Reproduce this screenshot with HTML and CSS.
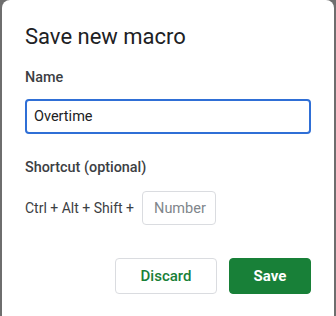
FILE: index.html
```html
<!DOCTYPE html>
<html>
<head>
<meta charset="utf-8">
<link rel="stylesheet" href="styles.css">
</head>
<body>
<div class="dialog">
  <h1 class="title">Save new macro</h1>
  <div class="label name-label">Name</div>
  <div class="input name-input">Overtime</div>
  <div class="label shortcut-label">Shortcut (optional)</div>
  <div class="shortcut-row">
    <span class="keys">Ctrl + Alt + Shift +</span>
    <div class="input number-input">Number</div>
  </div>
  <div class="actions">
    <button class="btn btn-discard">Discard</button>
    <button class="btn btn-save">Save</button>
  </div>
</div>
</body>
</html>
```
FILE: styles.css
```css
html, body {
  margin: 0;
  padding: 0;
  height: 100%;
}
body {
  background: #6e6e6e;
  font-family: Roboto, "Liberation Sans", sans-serif;
  overflow: hidden;
}
.dialog {
  box-sizing: border-box;
  margin: 0 2px;
  height: 316px;
  background: #ffffff;
  border-radius: 8px 8px 0 0;
  padding: 23px 23px 0 23px;
  display: flex;
  flex-direction: column;
}
.title {
  margin: 0;
  font-size: 22px;
  line-height: 28px;
  font-weight: 400;
  color: #202124;
}
.label {
  font-size: 14.4px;
  line-height: 20px;
  font-weight: 500;
  color: #3c4043;
}
.name-label {
  margin-top: 17px;
}
.input {
  box-sizing: border-box;
  display: flex;
  align-items: center;
  border-radius: 4px;
  font-size: 14.5px;
}
.name-input {
  margin-top: 11px;
  height: 35px;
  border: 2px solid #2f6fd6;
  padding: 0 7px;
  color: #202124;
}
.shortcut-label {
  margin-top: 24px;
}
.shortcut-row {
  margin-top: 13px;
  display: flex;
  align-items: center;
  gap: 8px;
}
.keys {
  font-size: 14px;
  color: #3c4043;
}
.number-input {
  width: 74px;
  height: 34px;
  border: 1px solid #dadce0;
  padding: 0 11px;
  color: #80868b;
}
.actions {
  margin-top: 33px;
  display: flex;
  justify-content: flex-end;
  gap: 12px;
}
.btn {
  box-sizing: border-box;
  height: 36px;
  border-radius: 4px;
  font-family: Roboto, "Liberation Sans", sans-serif;
  font-size: 15px;
  font-weight: 500;
  padding: 0;
}
.btn-discard {
  width: 102px;
  background: #ffffff;
  border: 1px solid #dadce0;
  color: #188038;
}
.btn-save {
  width: 82px;
  background: #188038;
  border: 1px solid #188038;
  color: #ffffff;
  font-weight: 700;
}
```
